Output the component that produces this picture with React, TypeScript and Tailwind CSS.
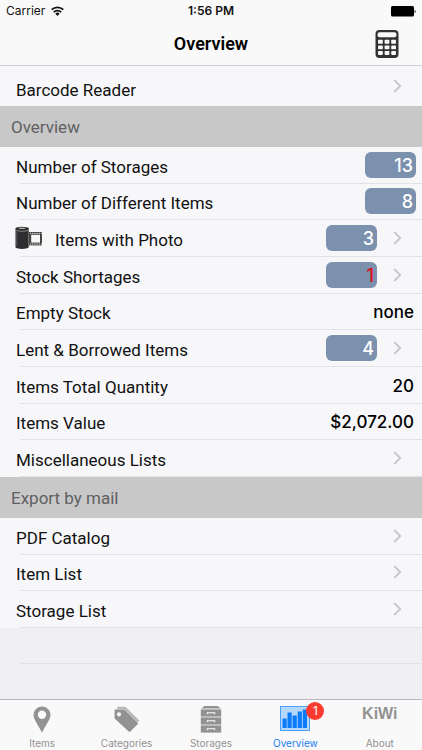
import clsx from "clsx";

interface Row {
  label: string;
  link?: boolean;
  photo?: boolean;
  badge?: number;
  alert?: boolean;
  value?: string;
}

const overviewRows: Row[] = [
  { label: "Number of Storages", badge: 13 },
  { label: "Number of Different Items", badge: 8 },
  { label: "Items with Photo", badge: 3, link: true, photo: true },
  { label: "Stock Shortages", badge: 1, link: true, alert: true },
  { label: "Empty Stock", value: "none" },
  { label: "Lent & Borrowed Items", badge: 4, link: true },
  { label: "Items Total Quantity", value: "20" },
  { label: "Items Value", value: "$2,072.00" },
  { label: "Miscellaneous Lists", link: true },
];

const exportRows: Row[] = [
  { label: "PDF Catalog", link: true },
  { label: "Item List", link: true },
  { label: "Storage List", link: true },
];

const WifiIcon = () => (
  <svg width="13" height="10" viewBox="0 0 13 10" fill="none" stroke="#111" strokeWidth="1.8">
    <path d="M0.7 3.7a8.2 8.2 0 0 1 11.6 0" />
    <path d="M2.8 6.2a5.2 5.2 0 0 1 7.4 0" />
    <path d="M6.5 9.9 4.4 7.7a2.9 2.9 0 0 1 4.2 0z" fill="#111" stroke="none" />
  </svg>
);

const BatteryIcon = () => (
  <svg width="25" height="11" viewBox="0 0 25 11">
    <rect width="23" height="10.5" rx="1.5" />
    <path d="M23.6 3.8c1.4.4 1.4 3 0 3.4z" />
  </svg>
);

const CalculatorIcon = () => (
  <svg width="24" height="28" viewBox="0 0 24 28">
    <rect x="0.5" width="23" height="28" rx="4" fill="#333" />
    <rect x="2.6" y="2.2" width="18.8" height="5" rx="1.8" fill="#f9f9f9" />
    {[9.8, 15.4, 21].map((y) =>
      [3, 9.6, 16.2].map((x) => (
        <rect key={`${x}-${y}`} x={x} y={y} width="4.8" height="3.9" rx="0.8" fill="#f9f9f9" />
      ))
    )}
  </svg>
);

const FilmIcon = () => (
  <svg width="28" height="24" viewBox="0 0 28 24">
    <path d="M14 6h13v13.4H14z" fill="#444" />
    <path d="M16.2 8.8H25v7.8h-8.8z" fill="#f7f7fa" />
    <path
      d="M15 7.4h12M15 18h12"
      stroke="#f7f7fa"
      strokeWidth="1"
      strokeDasharray="1.2 1"
    />
    <path d="M0.5 2.4h13.2v19.2c-1.6 1.8-11.6 1.8-13.2 0z" fill="#2e2e30" />
    <path d="M1.8 6v14" stroke="#66666a" strokeWidth="0.8" />
    <ellipse cx="7.1" cy="2.6" rx="6.6" ry="1.8" fill="#2e2e30" />
    <path d="M1 4.4c3 1.2 9.4 1.2 12.4 0" stroke="#aaa" strokeWidth="0.7" fill="none" />
    <ellipse cx="7.1" cy="2.2" rx="3.6" ry="0.8" fill="#aaa" />
  </svg>
);

const Chevron = () => (
  <svg
    width="9"
    height="14"
    viewBox="0 0 9 14"
    fill="none"
    stroke="#c7c7cc"
    strokeWidth="1.8"
    className="mr-5 ml-4 shrink-0"
  >
    <path d="M1.2 1l6 6-6 6" />
  </svg>
);

const PinIcon = () => (
  <svg width="18" height="27" viewBox="0 0 18 27" fill="#929292">
    <path
      fillRule="evenodd"
      d="M9 .4a8.5 8.5 0 0 1 8.5 8.5c0 4.6-5.5 11-8.5 17.8C6 19.9.5 13.5.5 8.9A8.5 8.5 0 0 1 9 .4zM9 4.6a4.2 4.2 0 1 0 0 8.4 4.2 4.2 0 0 0 0-8.4z"
    />
  </svg>
);

const TagsIcon = () => (
  <svg width="26" height="27" viewBox="0 0 26 27">
    <path d="M3 1.6 3.9.7h7.6L25.3 14.5l-1.8 2L10.6 3.2H3z" fill="#b9b9b9" />
    <path
      fillRule="evenodd"
      d="M1 3.6h9.4l13.2 13.2c.5.5.5 1 0 1.5l-7.3 7.3c-.5.5-1 .5-1.5 0L.6 12.600V4c0-.3.1-.4.4-.4zM5 6.2a2.1 2.1 0 1 0 0 4.2 2.1 2.1 0 0 0 0-4.2z"
      fill="#929292"
    />
  </svg>
);

const CabinetIcon = () => (
  <svg width="22" height="27" viewBox="0 0 22 27">
    <path d="M4.5 0h13L21 2.6H1z" fill="#929292" />
    {[3.4, 11.4, 19.4].map((y) => (
      <g key={y}>
        <rect x="0.8" y={y} width="20.4" height="7.2" fill="#929292" />
        <path d={`M7.3 ${y + 4.8}v-1.5h7.4v1.5`} stroke="#f9f9f9" strokeWidth="1.1" fill="none" />
      </g>
    ))}
  </svg>
);

const ChartIcon = () => (
  <svg width="30" height="25" viewBox="0 0 30 25">
    <rect x="0.5" y="0.5" width="29" height="24" fill="#b5d8fc" stroke="#4da0f8" />
    <path
      d="M2.5 12.5h4.2V22H2.500zM7.5 6.5h4.2V22H7.500zM12.6 9.5h4.2V22h-4.200zM17.7 5.5h4.2V22h-4.200zM22.8 3.5H27V22h-4.200z"
      fill="#0b7bfa"
    />
  </svg>
);

const tabs = [
  { label: "Items", icon: <PinIcon /> },
  { label: "Categories", icon: <TagsIcon /> },
  { label: "Storages", icon: <CabinetIcon /> },
  { label: "Overview", icon: <ChartIcon />, count: 1 },
  {
    label: "About",
    icon: (
      <span className="font-['Liberation_Sans',sans-serif] text-base leading-4 font-bold">
        KiWi
      </span>
    ),
  },
];

const ListRow: React.FC<{ row: Row }> = ({ row }) => {
  const content = (
    <>
      {row.photo && (
        <span className="mr-3">
          <FilmIcon />
        </span>
      )}
      <span className="flex-1 pt-1">{row.label}</span>
      {row.badge !== undefined && (
        <span
          className={clsx(
            "h-[26px] w-[51px] rounded-md bg-[#7b91ad] pr-[3px] text-right font-[Inter,sans-serif] text-lg leading-7 font-medium",
            row.alert ? "text-[#d9101c]" : "text-white",
            !row.link && "mr-[6px]"
          )}
        >
          {row.badge}
        </span>
      )}
      {row.value && (
        <span className="pt-0.5 pr-2 font-[Inter,sans-serif] font-medium text-black">
          {row.value}
        </span>
      )}
      {row.link && <Chevron />}
    </>
  );
  const className = clsx("flex h-full items-center", row.photo ? "pl-[15px]" : "pl-4");

  return (
    <li className="flex flex-col">
      {row.link ? (
        <a href="#" className={className}>
          {content}
        </a>
      ) : (
        <div className={className}>{content}</div>
      )}
      <div className="ml-5 h-px shrink-0 bg-[#e2e2e6]" />
    </li>
  );
};

const SectionTitle: React.FC<{ title: string }> = ({ title }) => (
  <h2 className="flex h-[41px] items-center bg-[#c8c8c8] pl-[11px] text-[#606062]">
    {title}
  </h2>
);

const App: React.FC = () => {
  return (
    <div className="flex min-h-screen flex-col bg-[#efeff4] font-[Roboto,sans-serif] text-[17px] leading-6 text-[#111]">
      <header className="border-b border-[#cfcfd2] bg-[#f9f9f9]">
        <div className="grid h-[22px] grid-cols-3 items-center pr-[6px] pl-[6px] font-[Inter,sans-serif] text-xs">
          <div className="flex items-center gap-[6px]">
            Carrier <WifiIcon />
          </div>
          <div className="text-center font-semibold">1:56 PM</div>
          <div className="flex justify-end">
            <BatteryIcon />
          </div>
        </div>
        <div className="grid h-[43px] grid-cols-[1fr_auto_1fr] items-center">
          <h1 className="col-start-2 text-lg font-semibold text-black">Overview</h1>
          <button aria-label="Calculator" className="mr-[23px] justify-self-end">
            <CalculatorIcon />
          </button>
        </div>
      </header>

      <main className="flex-1">
        <a href="#" className="flex h-10 items-center bg-[#f7f7fa] pl-4">
          <span className="flex-1 pt-2">Barcode Reader</span>
          <Chevron />
        </a>
        <SectionTitle title="Overview" />
        <ul className="grid min-h-[330px] auto-rows-fr bg-[#f7f7fa]">
          {overviewRows.map((row) => (
            <ListRow key={row.label} row={row} />
          ))}
        </ul>
        <SectionTitle title="Export by mail" />
        <ul className="grid min-h-[110px] auto-rows-fr bg-[#f7f7fa]">
          {exportRows.map((row) => (
            <ListRow key={row.label} row={row} />
          ))}
        </ul>
        <div className="ml-5 h-9 border-b border-[#e2e2e6]" />
      </main>

      <nav className="grid h-[51px] grid-cols-5 border-t border-[#b9b9bd] bg-[#f9f9f9] font-[Inter,sans-serif]">
        {tabs.map((tab) => (
          <a
            key={tab.label}
            href="#"
            className={clsx(
              "flex flex-col items-center pt-[6px] text-[10px] leading-3",
              tab.count ? "text-[#1a80f0]" : "text-[#929292]"
            )}
          >
            <span className="relative flex h-[31px] items-start">
              {tab.icon}
              {tab.count && (
                <span className="absolute -top-1 -right-3.5 h-[18px] w-[18px] rounded-full bg-[#fb3b30] text-center text-xs leading-[18px] text-white">
                  {tab.count}
                </span>
              )}
            </span>
            {tab.label}
          </a>
        ))}
      </nav>
    </div>
  );
};

export default App;
